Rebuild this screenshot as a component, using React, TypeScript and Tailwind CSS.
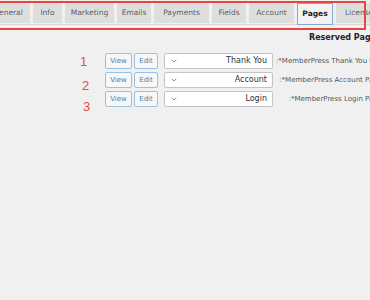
import { ChevronDown } from 'lucide-react';

const tabs = [
  { label: 'General', w: 'w-[44px]' },
  { label: 'Info', w: 'w-[29px]' },
  { label: 'Marketing', w: 'w-[49px]' },
  { label: 'Emails', w: 'w-[34px]' },
  { label: 'Payments', w: 'w-[55px]' },
  { label: 'Fields', w: 'w-[34px]' },
  { label: 'Account', w: 'w-[45px]' },
  { label: 'Pages', w: 'w-[36px]', active: true },
  { label: 'Licenses', w: 'w-[50px]' },
];

const rows = [
  { n: '1', page: 'Thank You', label: ':*MemberPress Thank You Page' },
  { n: '2', page: 'Account', label: ':*MemberPress Account Page' },
  { n: '3', page: 'Login', label: ':*MemberPress Login Page' },
];

export default function App() {
  return (
    <div className="relative w-[370px] h-[300px] overflow-hidden bg-[#f0f0f0] font-['DejaVu_Sans',sans-serif]">
      {/* Tabs */}
      <div className="pt-[3px] h-[25px] border-b border-[#d6d6d6]">
        <div className="flex gap-[3px] ml-[-14px]">
          {tabs.map((t) => (
            <div
              key={t.label}
              className={`${t.w} shrink-0 flex items-center justify-center text-[7.5px] ${
                t.active
                  ? 'h-[22px] bg-[#f3f3f3] border border-[#7eaad6] text-[#1d2327] font-bold'
                  : 'h-[20px] bg-[#dedede] text-[#5a5f64]'
              }`}
            >
              {t.label}
            </div>
          ))}
        </div>
      </div>

      {/* Heading */}
      <div className="pt-[7px] pl-[309px] text-[8px] font-bold text-[#1d2327] whitespace-nowrap">
        Reserved Pages
      </div>

      {/* Rows */}
      <div className="mt-[9px] flex flex-col gap-[3px] pl-[105px]">
        {rows.map((r) => (
          <div key={r.n} className="flex items-center h-[16px]">
            <button className="shrink-0 w-[27px] h-[16px] border border-[#9cc0e2] bg-[#f6f7f7] text-[#4f7eab] text-[7px] rounded-[2px]">
              View
            </button>
            <button className="shrink-0 ml-[2px] w-[24px] h-[16px] border border-[#9cc0e2] bg-[#f6f7f7] text-[#4f7eab] text-[7px] rounded-[2px]">
              Edit
            </button>
            <div className="shrink-0 ml-[6px] w-[109px] h-[16px] flex items-center justify-between px-[5px] bg-white border border-[#c3c4c7] rounded-[2px]">
              <ChevronDown size={8} strokeWidth={2} className="text-[#50575e]" />
              <span className="text-[8px] text-[#2c3338]">{r.page}</span>
            </div>
            <div className="ml-[3px] w-[106px] shrink-0 text-right text-[7px] text-[#50575e] whitespace-nowrap">
              {r.label}
            </div>
          </div>
        ))}
      </div>

      {/* Annotations */}
      <div className="absolute left-[-6px] top-[1px] w-[372px] h-[29px] border-2 border-[#e8453c] pointer-events-none" />
      <div className="absolute left-[80px] top-[52px] text-[13px] text-[#ef4a43] font-['Liberation_Sans',sans-serif]">1</div>
      <div className="absolute left-[82px] top-[76px] text-[13px] text-[#ef4a43] font-['Liberation_Sans',sans-serif]">2</div>
      <div className="absolute left-[83px] top-[97px] text-[13px] text-[#ef4a43] font-['Liberation_Sans',sans-serif]">3</div>
    </div>
  );
}
